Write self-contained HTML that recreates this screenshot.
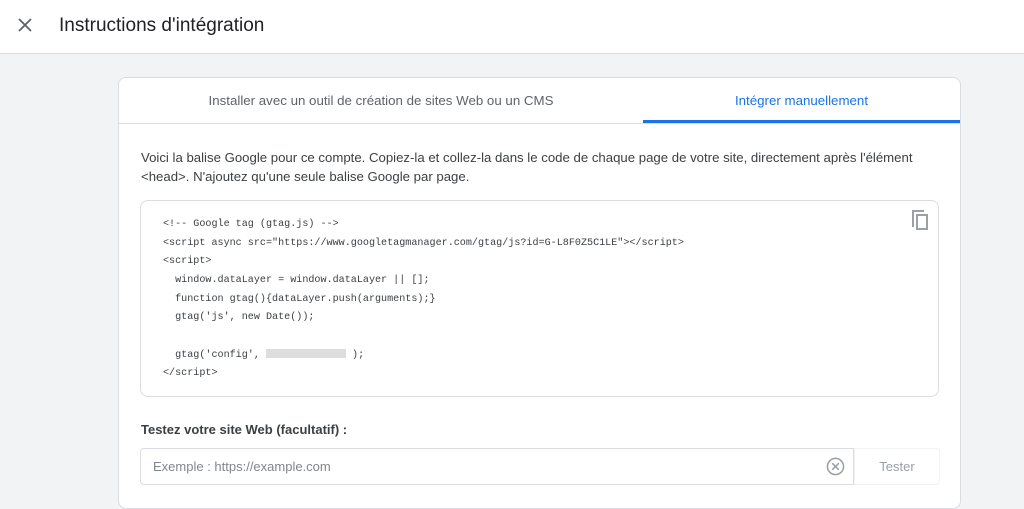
<!DOCTYPE html>
<html><head><meta charset="utf-8"><style>
body{margin:0;width:1024px;height:496px;overflow:hidden;background:#f1f3f4;font-family:"Liberation Sans",sans-serif;position:relative}
.hdr{position:absolute;left:0;top:0;width:1024px;height:53px;background:#fff;border-bottom:1px solid #dadce0}
.hdr .t{position:absolute;left:59px;top:15px;font-size:19px;color:#202124}
.card{position:absolute;left:118px;top:77px;width:841px;height:430px;background:#fff;border:1px solid #dadce0;border-radius:8px}
.tabs{position:absolute;left:0;top:0;width:841px;height:45px;border-bottom:1px solid #dadce0}
.tab{position:absolute;top:15px;font-size:13.3px;color:#5f6368;text-align:center}
.ul{position:absolute;left:524px;top:42px;width:317px;height:3px;background:#1a73e8}
.p{position:absolute;left:22px;top:70px;width:800px;font-size:13.2px;line-height:19px;color:#3c4043}
.code{position:absolute;left:21px;top:122px;width:797px;height:195px;border:1px solid #dadce0;border-radius:8px}
pre{position:absolute;left:22px;top:15px;margin:0;font-family:"Liberation Mono",monospace;font-size:10.1px;line-height:18.65px;color:#3c4043}
.blur{display:inline-block;width:80px;height:9px;background:#ddd;vertical-align:middle}
.lbl{position:absolute;left:22px;top:344px;font-size:13px;font-weight:bold;color:#3c4043}
.in{position:absolute;left:21px;top:370px;width:712px;height:35px;border:1px solid #dadce0;border-radius:4px 0 0 4px}
.in span{position:absolute;left:12px;top:10px;font-size:13px;color:#80868b}
.btn{position:absolute;left:735px;top:370px;width:84px;height:35px;border:1px solid #f1f3f4;border-radius:0 4px 4px 0;font-size:13px;color:#9aa0a6;text-align:center;line-height:35px}
</style></head><body>
<div class="hdr">
<svg style="position:absolute;left:18px;top:18px" width="14" height="14" viewBox="0 0 14 14"><path d="M1 1L13 13M13 1L1 13" stroke="#5f6368" stroke-width="1.8"/></svg>
<div class="t">Instructions d'intégration</div></div>
<div class="card">
<div class="tabs"><div class="tab" style="left:0;width:524px">Installer avec un outil de création de sites Web ou un CMS</div>
<div class="tab" style="left:524px;width:317px;color:#1a73e8">Intégrer manuellement</div><div class="ul"></div></div>
<div class="p">Voici la balise Google pour ce compte. Copiez-la et collez-la dans le code de chaque page de votre site, directement après l'élément &lt;head&gt;. N'ajoutez qu'une seule balise Google par page.</div>
<div class="code">
<svg style="position:absolute;left:769px;top:8px" width="20" height="22" viewBox="0 0 20 22"><path d="M3 18V2h11" fill="none" stroke="#9aa0a6" stroke-width="2"/><rect x="7" y="6" width="10" height="14" fill="none" stroke="#9aa0a6" stroke-width="2"/></svg>
<pre>&lt;!-- Google tag (gtag.js) --&gt;
&lt;script async src="https://www.googletagmanager.com/gtag/js?id=G-L8F0Z5C1LE"&gt;&lt;/script&gt;
&lt;script&gt;
  window.dataLayer = window.dataLayer || [];
  function gtag(){dataLayer.push(arguments);}
  gtag('js', new Date());

  gtag('config', <span class="blur"></span> );
&lt;/script&gt;</pre></div>
<div class="lbl">Testez votre site Web (facultatif) :</div>
<div class="in"><span>Exemple : https://example.com</span>
<svg style="position:absolute;left:685px;top:8px" width="19" height="19" viewBox="0 0 20 20"><circle cx="10" cy="10" r="8.5" fill="none" stroke="#9aa0a6" stroke-width="1.6"/><path d="M6.5 6.5L13.5 13.5M13.5 6.5L6.5 13.5" stroke="#9aa0a6" stroke-width="1.6"/></svg></div>
<div class="btn">Tester</div>
</div>
</body></html>
